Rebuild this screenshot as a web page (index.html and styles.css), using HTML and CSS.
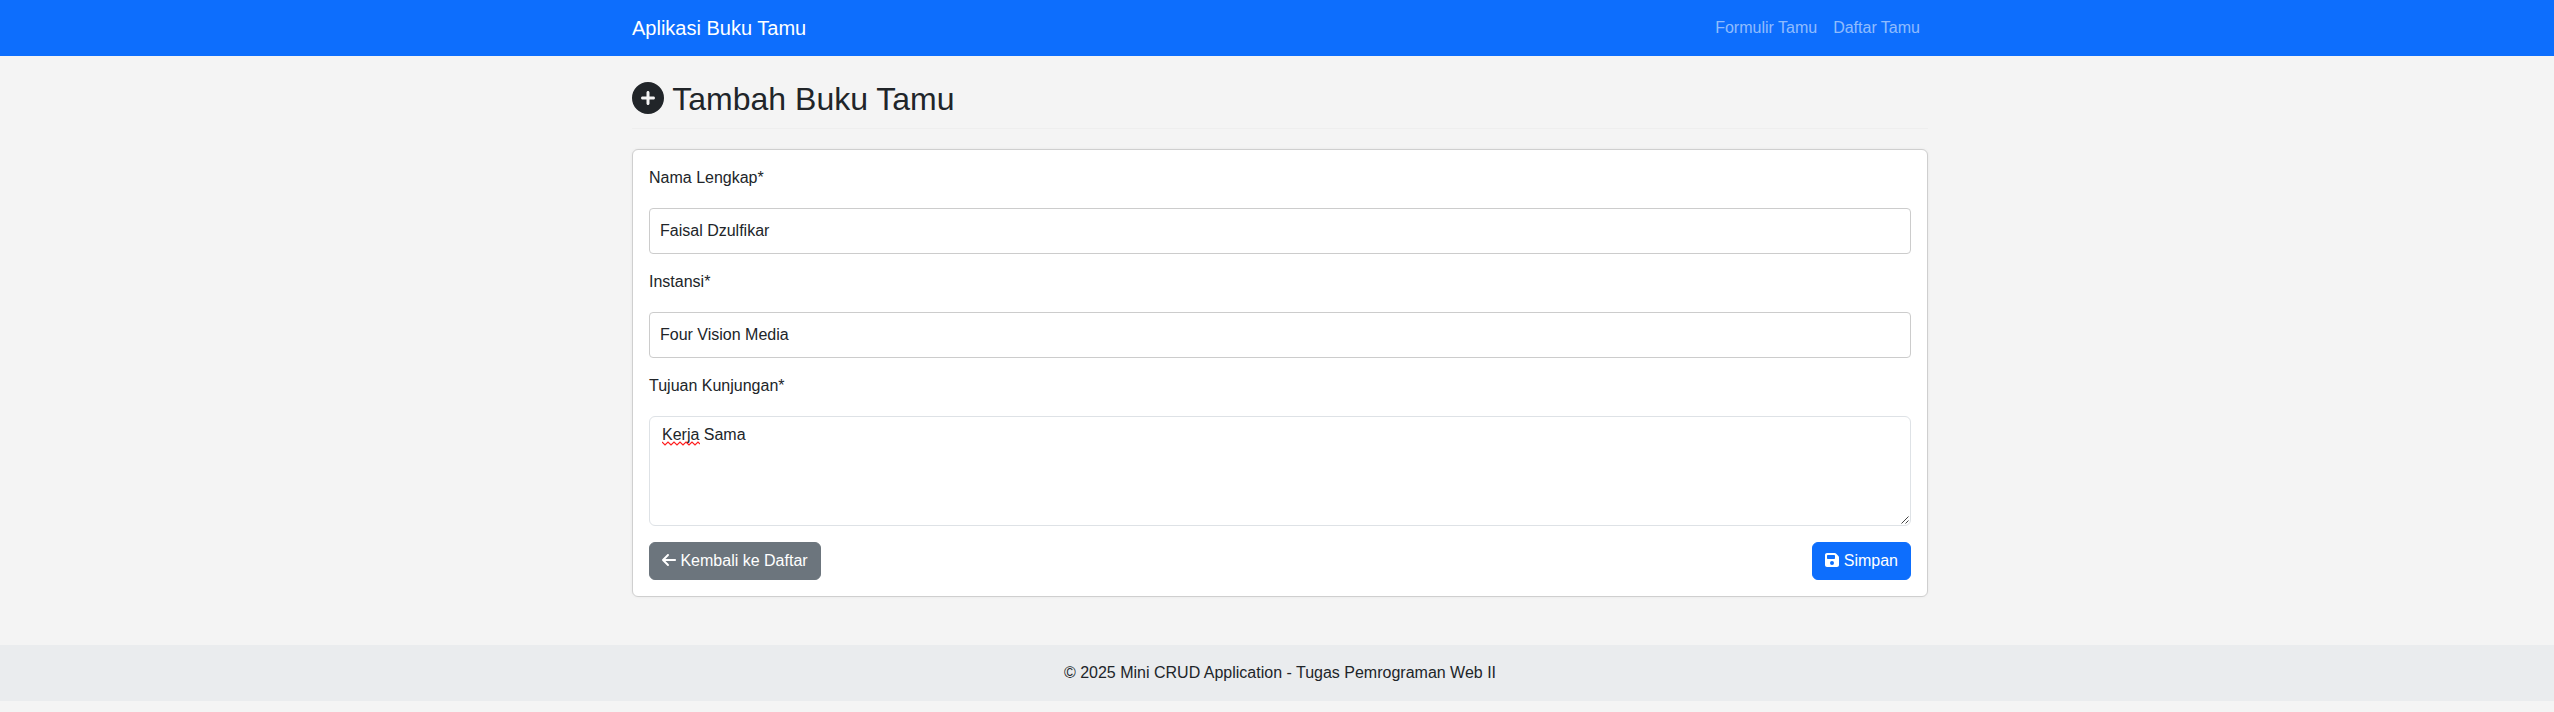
FILE: index.html
```html
<!DOCTYPE html>
<html lang="id">
<head>
<meta charset="utf-8">
<title>Aplikasi Buku Tamu</title>
<link rel="stylesheet" href="styles.css">
</head>
<body>
<div class="page">
  <nav class="navbar">
    <div class="container navbar-inner">
      <a class="brand">Aplikasi Buku Tamu</a>
      <div class="nav-links">
        <a class="nav-link">Formulir Tamu</a>
        <a class="nav-link">Daftar Tamu</a>
      </div>
    </div>
  </nav>
  <main class="container main">
    <h2 class="title"><svg class="icon-title" viewBox="0 0 512 512"><path d="M256 512A256 256 0 1 0 256 0a256 256 0 1 0 0 512zM232 344V280H168c-13.300 0-24-10.700-24-24s10.700-24 24-24h64V168c0-13.300 10.700-24 24-24s24 10.700 24 24v64h64c13.300 0 24 10.700 24 24s-10.700 24-24 24H280v64c0 13.300-10.700 24-24 24s-24-10.700-24-24z"/></svg> Tambah Buku Tamu</h2>
    <form class="card">
      <div class="field">
        <label class="label" for="nama">Nama Lengkap*</label>
        <input class="input" id="nama" type="text" value="Faisal Dzulfikar">
      </div>
      <div class="field">
        <label class="label" for="instansi">Instansi*</label>
        <input class="input" id="instansi" type="text" value="Four Vision Media">
      </div>
      <div class="field">
        <label class="label" for="tujuan">Tujuan Kunjungan*</label>
        <div class="textarea-wrap">
          <textarea class="textarea" id="tujuan" rows="4" spellcheck="false">Kerja Sama</textarea>
          <svg class="squiggle" width="38" height="5" viewBox="0 0 38 5"><path d="M0 1l3 3 3-3 3 3 3-3 3 3 3-3 3 3 3-3 3 3 3-3 3 3 3-3 2 2"/></svg>
          <svg class="grip" width="8" height="8" viewBox="0 0 8 8"><path d="M.5 7.500l7-7M4.500 7.500l3-3"/></svg>
        </div>
      </div>
      <div class="actions">
        <a class="btn btn-secondary"><svg class="icon-arrow" viewBox="0 0 448 512"><path d="M9.400 233.400c-12.500 12.500-12.500 32.800 0 45.300l160 160c12.500 12.500 32.800 12.500 45.300 0s12.500-32.800 0-45.300L109.200 288 416 288c17.700 0 32-14.300 32-32s-14.300-32-32-32l-306.700 0L214.600 118.600c12.500-12.500 12.500-32.800 0-45.300s-32.800-12.500-45.300 0l-160 160z"/></svg> Kembali ke Daftar</a>
        <button class="btn btn-primary" type="button"><svg class="icon-save" viewBox="0 0 448 512"><path d="M64 32C28.700 32 0 60.700 0 96V416c0 35.300 28.700 64 64 64H384c35.300 0 64-28.700 64-64V173.300c0-17-6.700-33.300-18.700-45.300L352 50.700C340 38.700 323.700 32 306.700 32H64zm0 96c0-17.700 14.300-32 32-32H288c17.700 0 32 14.300 32 32v64c0 17.700-14.300 32-32 32H96c-17.700 0-32-14.300-32-32V128zM224 288a64 64 0 1 1 0 128 64 64 0 1 1 0-128z"/></svg> Simpan</button>
      </div>
    </form>
  </main>
  <footer class="footer">© 2025 Mini CRUD Application - Tugas Pemrograman Web II</footer>
</div>
</body>
</html>
```
FILE: styles.css
```css
* { box-sizing: border-box; }
html { overflow: hidden; }
body {
  margin: 0;
  background: #f4f4f4;
  color: #212529;
  font: 400 16px/1.5 "Liberation Sans", Arial, sans-serif;
}
.page { width: 2560px; }
.container { width: 1320px; margin: 0 auto; padding: 0 12px; }
.navbar { height: 56px; background: #0d6efd; }
.navbar-inner { display: flex; align-items: center; justify-content: space-between; height: 100%; }
.brand { color: #fff; font-size: 20px; line-height: 30px; }
.nav-links { display: flex; }
.nav-link { padding: 8px; color: rgba(255, 255, 255, .55); }
.main { padding-top: 24px; }
.title {
  height: 49px;
  margin: 0 0 20px;
  border-bottom: 1px solid #eee;
  font-size: 32px;
  font-weight: 400;
  line-height: 38px;
}
.icon-title, .icon-arrow, .icon-save { display: inline-block; overflow: visible; fill: currentColor; vertical-align: -.125em; }
.icon-title { width: 32px; height: 32px; }
.icon-arrow, .icon-save { width: 14px; height: 16px; }
.card {
  padding: 16px;
  background: #fff;
  border: 1px solid #cfcfcf;
  border-radius: 6px;
  box-shadow: 0 0 3px rgba(0, 0, 0, .06);
}
.field { margin-bottom: 16px; }
.label { display: block; margin-bottom: 18px; }
.input, .textarea {
  display: block;
  width: 100%;
  margin: 0;
  background: #fff;
  color: #212529;
  font: inherit;
  outline: 0;
}
.input { height: 46px; padding: 10px; border: 1px solid #ccc; border-radius: 4px; }
.textarea-wrap { position: relative; }
.textarea { height: 110px; padding: 6px 12px; border: 1px solid #dee2e6; border-radius: 6px; resize: none; }
.squiggle { position: absolute; left: 13px; top: 25px; fill: none; stroke: #ff2020; stroke-width: 1.2; }
.grip { position: absolute; right: 2px; bottom: 2px; fill: none; stroke: #444; stroke-width: 1; }
.actions { display: flex; justify-content: space-between; }
.btn {
  height: 38px;
  padding: 6px 12px;
  border: 1px solid transparent;
  border-radius: 6px;
  color: #fff;
  font: inherit;
}
.btn-secondary { background: #6c757d; border-color: #6c757d; }
.btn-primary { background: #0d6efd; border-color: #0d6efd; }
.footer { height: 56px; margin-top: 48px; padding: 16px; background: #eaecee; text-align: center; }
```
